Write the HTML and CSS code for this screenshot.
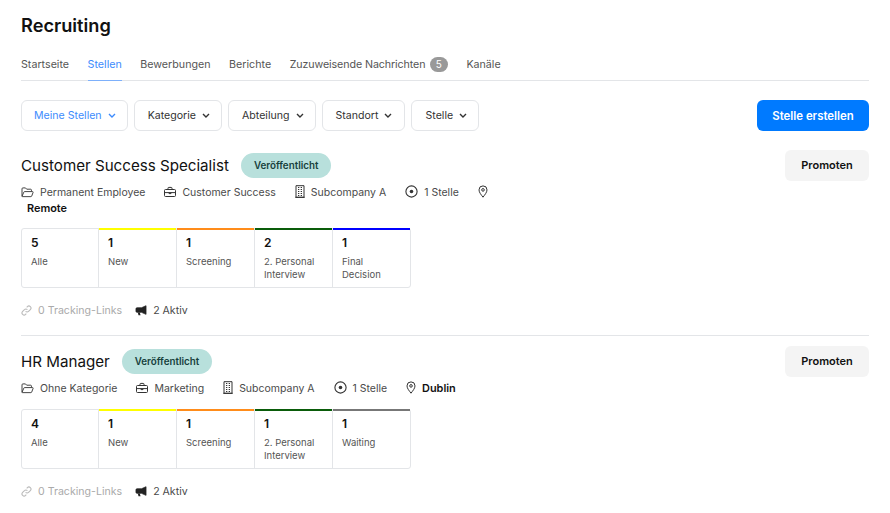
FILE: index.html
```html
<!DOCTYPE html>
<html lang="de">
<head>
<meta charset="utf-8">
<title>Recruiting</title>
<link rel="stylesheet" href="styles.css">
</head>
<body>
<svg class="defs" width="0" height="0" aria-hidden="true">
  <symbol id="i-folder" viewBox="0 0 14 12"><path d="M1 10.2V2a1 1 0 0 1 1-1h2.800l1.300 1.400h4.200a1 1 0 0 1 1 1v1.200M1 10.200 3 5.600a.9.9 0 0 1 .8-.6h8.700c.5 0 .8.400.6.900l-1.500 4a1 1 0 0 1-.9.600H1.900c-.5 0-.9-.2-.9-.3z" fill="none" stroke="currentColor" stroke-width="1"/></symbol>
  <symbol id="i-case" viewBox="0 0 12 12"><path d="M1.500 3.500h9a1 1 0 0 1 1 1v5a1 1 0 0 1-1 1h-9a1 1 0 0 1-1-1v-5a1 1 0 0 1 1-1zM4 3.500V2.200a.8.8 0 0 1 .8-.8h2.400a.8.8 0 0 1 .8.800v1.300M.5 6.600h11M5 6.600v1h2v-1" fill="none" stroke="currentColor" stroke-width="1"/></symbol>
  <symbol id="i-building" viewBox="0 0 10 13"><path d="M1 .7h8v11.600H1zM.2 12.300h9.600" fill="none" stroke="currentColor" stroke-width="1"/><path d="M3 2.500h1.300M5.700 2.500H7M3 4.500h1.300M5.700 4.500H7M3 6.500h1.300M5.700 6.500H7M3 8.500h1.300M5.700 8.500H7M3 10.500h1.300M5.700 10.500H7" fill="none" stroke="currentColor" stroke-width="1"/></symbol>
  <symbol id="i-target" viewBox="0 0 13 13"><circle cx="6.500" cy="6.500" r="5.600" fill="none" stroke="currentColor" stroke-width="1.100"/><circle cx="6.500" cy="6.500" r="1.800" fill="currentColor"/></symbol>
  <symbol id="i-pin" viewBox="0 0 10 13"><path d="M5 12.200C3.400 10 1 7.400 1 4.900a4 4 0 0 1 8 0c0 2.500-2.400 5.100-4 7.300z" fill="none" stroke="currentColor" stroke-width="1"/><circle cx="5" cy="4.900" r="1.300" fill="none" stroke="currentColor" stroke-width="1"/></symbol>
  <symbol id="i-link" viewBox="0 0 12 12"><path d="M5 7a2.200 2.200 0 0 0 3.200 0l2-2A2.250 2.250 0 0 0 7 1.800l-.8.8M7 5a2.200 2.200 0 0 0-3.200 0l-2 2A2.250 2.250 0 0 0 5 10.200l.8-.8" fill="none" stroke="currentColor" stroke-width="1.200"/></symbol>
  <symbol id="i-horn" viewBox="0 0 13 12"><path d="M12 .8v9.400L7 8H2.200C1.500 8 1 7.500 1 6.900V4.100C1 3.500 1.500 3 2.200 3H7z" fill="currentColor" stroke="currentColor" stroke-width=".8" stroke-linejoin="round"/><path d="M3 8.300h2.200l.8 3H3.800z" fill="currentColor"/></symbol>
  <symbol id="i-chev" viewBox="0 0 8 5"><path d="M1 1l3 3 3-3" fill="none" stroke="currentColor" stroke-width="1.400"/></symbol>
</svg>

<main class="page">
  <h1 class="page-title">Recruiting</h1>

  <nav class="tabs">
    <a class="tab">Startseite</a>
    <a class="tab tab-active">Stellen</a>
    <a class="tab">Bewerbungen</a>
    <a class="tab">Berichte</a>
    <a class="tab tab-long">Zuzuweisende Nachrichten <span class="count">5</span></a>
    <a class="tab">Kanäle</a>
  </nav>

  <div class="toolbar">
    <button class="filter filter-active">Meine Stellen <svg class="chev"><use href="#i-chev"/></svg></button>
    <button class="filter">Kategorie <svg class="chev"><use href="#i-chev"/></svg></button>
    <button class="filter">Abteilung <svg class="chev"><use href="#i-chev"/></svg></button>
    <button class="filter filter-wide">Standort <svg class="chev"><use href="#i-chev"/></svg></button>
    <button class="filter">Stelle <svg class="chev"><use href="#i-chev"/></svg></button>
    <button class="primary">Stelle erstellen</button>
  </div>

  <section class="job">
    <div class="job-head">
      <h2 class="job-title">Customer Success Specialist</h2>
      <span class="badge">Veröffentlicht</span>
      <button class="promote">Promoten</button>
    </div>
    <p class="meta">
      <span class="mi"><svg class="ic ic-folder"><use href="#i-folder"/></svg>Permanent Employee</span>
      <span class="mi"><svg class="ic ic-case"><use href="#i-case"/></svg>Customer Success</span>
      <span class="mi"><svg class="ic ic-building"><use href="#i-building"/></svg>Subcompany A</span>
      <span class="mi"><svg class="ic ic-target"><use href="#i-target"/></svg>1 Stelle</span>
      <span class="mi mi-pin"><svg class="ic ic-pin"><use href="#i-pin"/></svg></span>
      <strong class="place">Remote</strong>
    </p>
    <div class="stages">
      <div class="stage"><b>5</b><span>Alle</span></div>
      <div class="stage c-yellow"><b>1</b><span>New</span></div>
      <div class="stage c-orange"><b>1</b><span>Screening</span></div>
      <div class="stage c-green"><b>2</b><span>2. Personal Interview</span></div>
      <div class="stage c-blue"><b>1</b><span>Final Decision</span></div>
    </div>
    <div class="foot">
      <span class="fi fi-muted"><svg class="ic ic-link"><use href="#i-link"/></svg>0 Tracking-Links</span>
      <span class="fi"><svg class="ic ic-horn"><use href="#i-horn"/></svg>2 Aktiv</span>
    </div>
  </section>

  <section class="job job-next">
    <div class="job-head">
      <h2 class="job-title">HR Manager</h2>
      <span class="badge">Veröffentlicht</span>
      <button class="promote">Promoten</button>
    </div>
    <p class="meta">
      <span class="mi"><svg class="ic ic-folder"><use href="#i-folder"/></svg>Ohne Kategorie</span>
      <span class="mi"><svg class="ic ic-case"><use href="#i-case"/></svg>Marketing</span>
      <span class="mi"><svg class="ic ic-building"><use href="#i-building"/></svg>Subcompany A</span>
      <span class="mi"><svg class="ic ic-target"><use href="#i-target"/></svg>1 Stelle</span>
      <span class="mi mi-pin"><svg class="ic ic-pin"><use href="#i-pin"/></svg></span>
      <strong class="place">Dublin</strong>
    </p>
    <div class="stages">
      <div class="stage"><b>4</b><span>Alle</span></div>
      <div class="stage c-yellow"><b>1</b><span>New</span></div>
      <div class="stage c-orange"><b>1</b><span>Screening</span></div>
      <div class="stage c-green"><b>1</b><span>2. Personal Interview</span></div>
      <div class="stage c-gray"><b>1</b><span>Waiting</span></div>
    </div>
    <div class="foot">
      <span class="fi fi-muted"><svg class="ic ic-link"><use href="#i-link"/></svg>0 Tracking-Links</span>
      <span class="fi"><svg class="ic ic-horn"><use href="#i-horn"/></svg>2 Aktiv</span>
    </div>
  </section>
</main>
</body>
</html>
```

FILE: styles.css
```css
* { box-sizing: border-box; }
html, body { margin: 0; padding: 0; background: #fff; }
body { font-family: Inter, "Liberation Sans", sans-serif; color: #111; overflow: hidden; height: 513px; }
.defs { position: absolute; }
.page { padding: 15px 21px 0; }

.page-title { margin: 0; font-size: 18.2px; line-height: 21px; padding-bottom: 1px; font-weight: 600; color: #111; }

.tabs { display: flex; gap: 18.5px; margin-top: 15px; height: 29px; border-bottom: 1px solid #e3e5e8; font-size: 10.7px; color: #555; }
.tab { display: block; height: 29px; line-height: 26px; white-space: nowrap; }
.tab-long { letter-spacing: -.1px; }
.tab-active { color: #3d8bfd; border-bottom: 1px solid #7db0fb; }
.count { display: inline-block; width: 18px; height: 15px; line-height: 15px; margin-left: 1.5px; border-radius: 8px; background: #999; color: #fff; font-size: 10px; text-align: center; letter-spacing: 0; }

.toolbar { display: flex; gap: 6px; margin-top: 19px; height: 31px; }
.filter { display: flex; align-items: center; gap: 6px; height: 31px; padding: 0 11px 0 13px; background: #fff; border: 1px solid #e3e5e8; border-radius: 6px; font: 400 10.6px Inter, sans-serif; color: #333; white-space: nowrap; }
.filter-active { padding-left: 12px; color: #3d8bfd; }
.filter-wide { padding-right: 12px; }
.chev { width: 8px; height: 5px; color: inherit; }
.primary { margin-left: auto; width: 112px; height: 31px; border: 0; border-radius: 6px; background: #007aff; color: #fff; font: 600 11.4px Inter, sans-serif; }

.job { padding-top: 19px; height: 204px; }
.job-next { border-top: 1px solid #e3e5e8; height: 178px; padding-top: 10px; }
.job-head { display: flex; align-items: center; height: 31px; }
.job-title { margin: 0; font-size: 15.15px; line-height: 20px; font-weight: 400; color: #111; }
.badge { margin-left: 12px; height: 25px; line-height: 25px; padding: 0 13px; border-radius: 13px; background: #b8e0dc; color: #17403c; font-size: 9.8px; font-weight: 600; white-space: nowrap; }
.promote { margin-left: auto; width: 84px; height: 31px; padding: 0 0 2px; border: 0; border-radius: 6px; background: #f4f4f4; color: #111; font: 600 11px Inter, sans-serif; }

.meta { width: 480px; margin: 4px 0 0; font-size: 10.5px; line-height: 16px; color: #4a4a4a; }
.mi { display: inline-block; margin-right: 16px; white-space: nowrap; }
.mi-pin { margin-right: -3px; }
.ic { display: inline-block; vertical-align: -2px; margin-right: 6px; color: #333; }
.ic-folder { width: 13px; height: 11px; }
.ic-case { width: 12px; height: 12px; }
.ic-building { width: 10px; height: 13px; }
.ic-target { width: 13px; height: 13px; }
.ic-pin { width: 10px; height: 13px; margin-right: 0; }
.ic-link { width: 11px; height: 11px; color: #bbb; }
.ic-horn { width: 12px; height: 11px; color: #222; }
.place { margin-left: 6px; font-size: 10.9px; line-height: 14px; font-weight: 600; color: #111; }

.stages { display: flex; width: 390px; height: 60px; margin-top: 11px; border: 1px solid #e3e5e8; border-radius: 3px; }
.job-next .stages { margin-top: 12px; }
.stage { position: relative; flex: 0 0 78px; padding: 6px 9px; border-left: 1px solid #e3e5e8; }
.stage:first-child { flex-basis: 76px; border-left: 0; }
.stage::before { content: ""; position: absolute; left: 0; right: 0; top: -1px; height: 2px; }
.c-yellow::before { background: #ffff00; }
.c-orange::before { background: #ff8c1a; }
.c-green::before { background: #0a5c0a; }
.c-blue::before { background: #0000ff; }
.c-gray::before { background: #777; }
.stage b { display: block; font-size: 12px; line-height: 16px; font-weight: 600; color: #111; }
.stage span { display: block; margin-top: 4px; font-size: 9.5px; line-height: 13px; color: #555; }

.foot { display: flex; gap: 13px; margin-top: 15px; font-size: 10.6px; line-height: 16px; color: #4a4a4a; }
.fi { white-space: nowrap; }
.fi-muted { color: #aaa; }
```
